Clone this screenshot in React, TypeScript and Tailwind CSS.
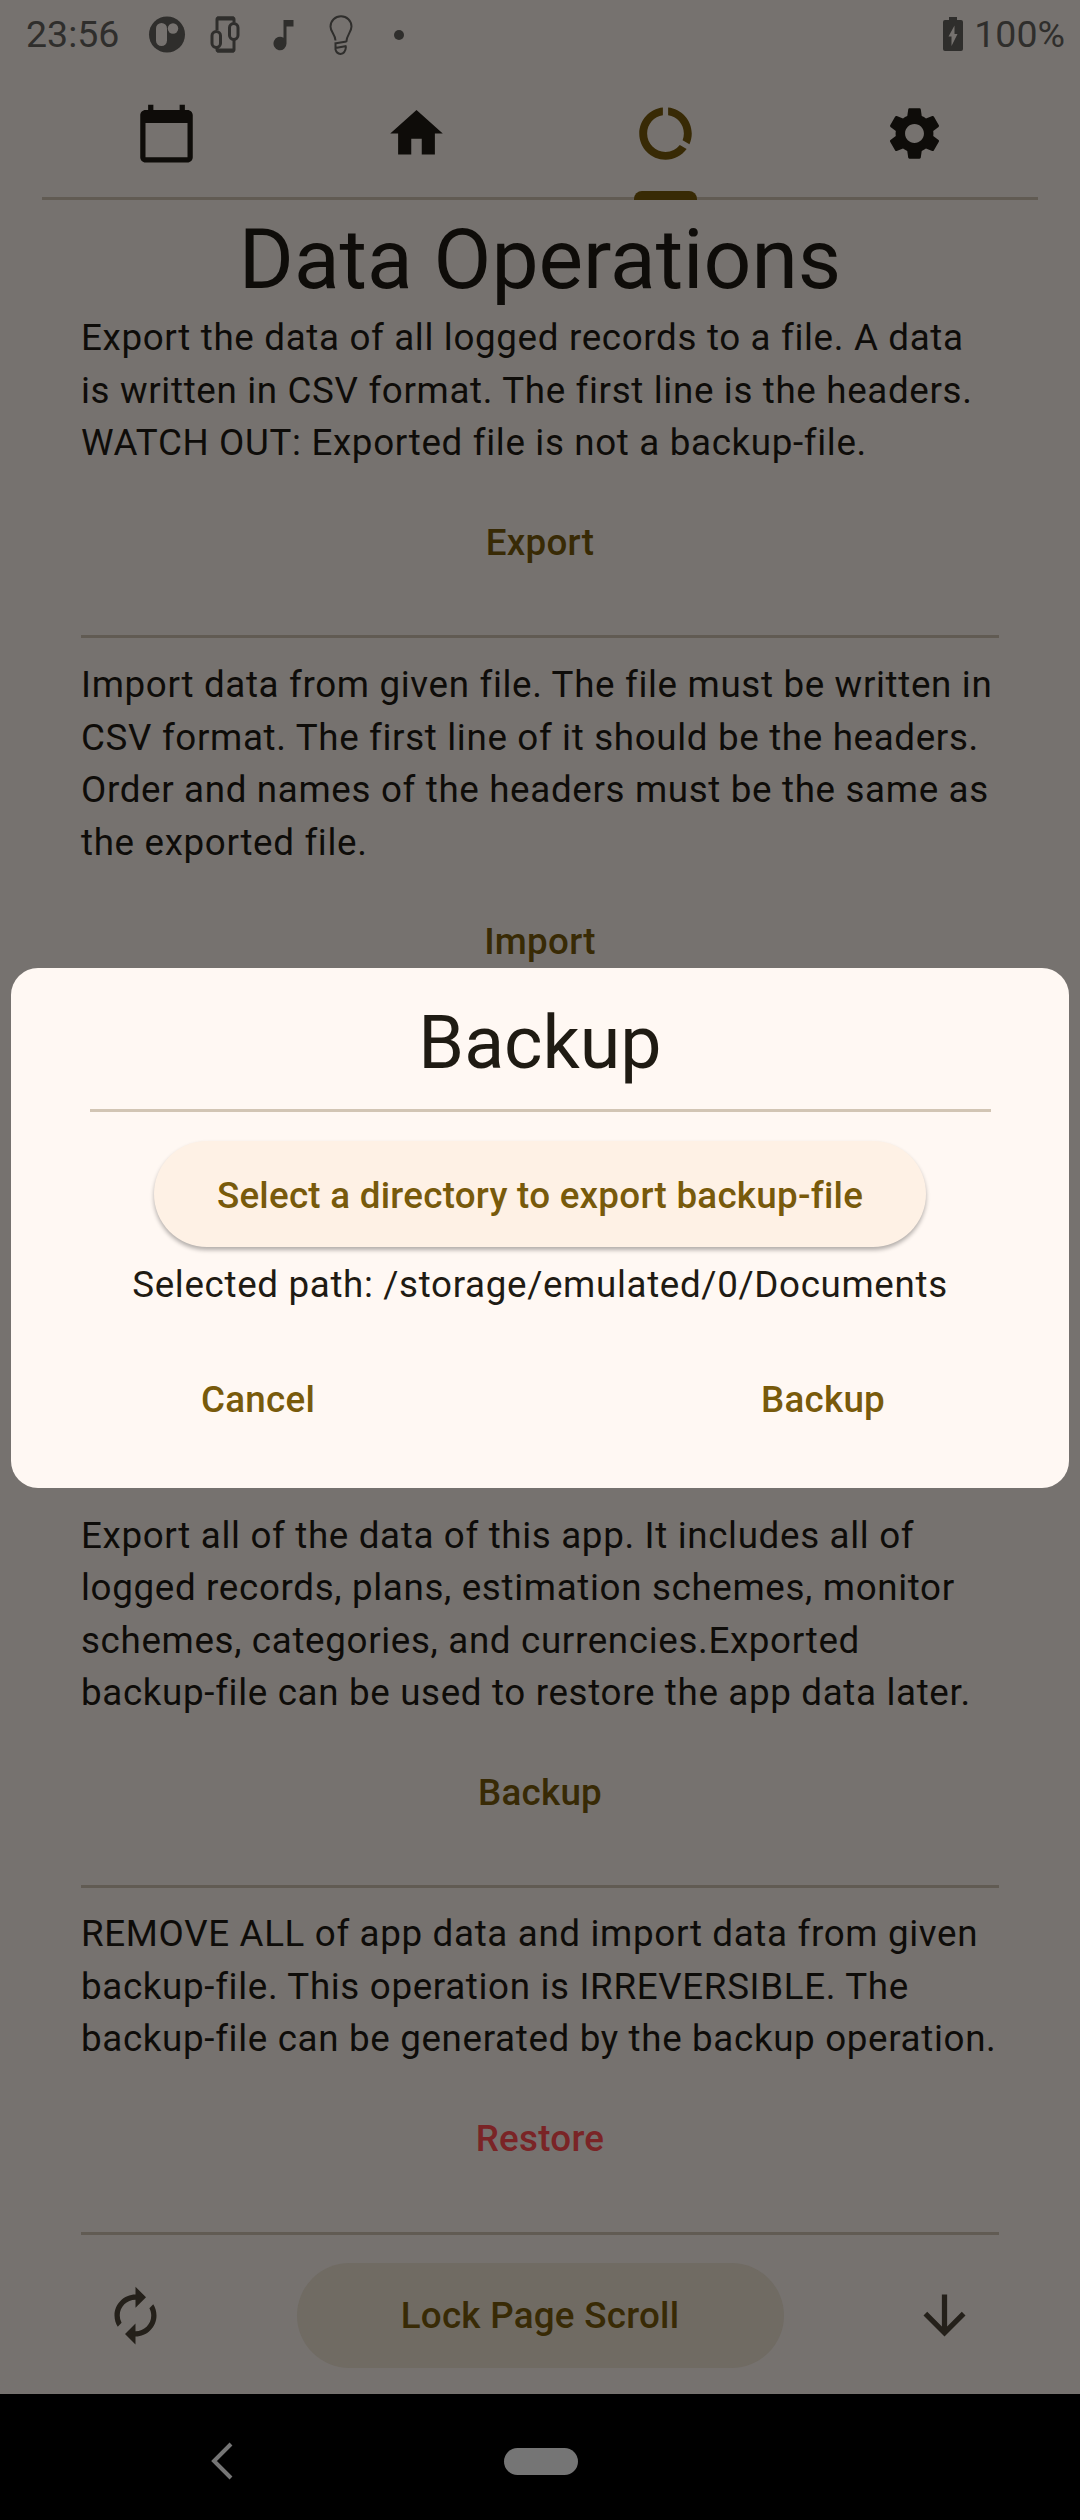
import React from "react";
import { MdHome, MdDataUsage, MdSettings, MdAutorenew, MdArrowDownward, MdCalendarToday } from "react-icons/md";

const text = "text-[36.75px] leading-[52.5px] tracking-[0.656px]";
const action = "font-medium text-[36.75px] leading-[52.5px] tracking-[0.2625px]";

function Section({ children, label, color, className }: { children: React.ReactNode; label: string; color: string; className: string }) {
  return (
    <section className={`mx-[81px] flex flex-col items-center border-b-[3px] border-[#615b53] ${className}`}>
      <p className={`w-full whitespace-nowrap text-[#0e0c09] ${text}`}>{children}</p>
      <button className={`mt-[47px] ${action} ${color}`}>{label}</button>
    </section>
  );
}

export default function App() {
  return (
    <div className="relative flex h-[2520px] w-[1080px] flex-col overflow-hidden bg-[#76726f] font-[Roboto,sans-serif]">
      <header className="flex h-[69px] shrink-0 items-center pl-[26px] pr-[15px] text-[#2f2e2c]">
        <span className="w-[122px] text-[37.5px] font-[450] leading-[69px]">23:56</span>
        <svg width="38" height="38" viewBox="0 0 38 38" className="shrink-0">
          <circle cx="19" cy="18.5" r="18" fill="#2f2e2c" />
          <rect x="8" y="7" width="11" height="23" rx="5.5" fill="#76726f" />
          <circle cx="25" cy="12.5" r="5.2" fill="#76726f" />
        </svg>
        <svg width="32" height="40" viewBox="0 0 32 40" fill="none" stroke="#2f2e2c" className="ml-[23px] shrink-0">
          <path d="M8 15V4.500q0-1.500 1.500-1.500h14q1.500 0 1.500 1.500v3M8 32v2.500q0 1.500 1.500 1.500h14q1.500 0 1.500-1.500V23" strokeWidth="3" />
          <path d="M8 3.500h17M8 35.500h17" strokeWidth="4" />
          <rect x="3" y="16.500" width="8.500" height="16" rx="4.200" strokeWidth="3" />
          <rect x="20.500" y="8.500" width="8.500" height="16" rx="4.200" strokeWidth="3" />
        </svg>
        <svg width="22" height="34" viewBox="0 0 22 34" fill="#2f2e2c" className="ml-[31px] shrink-0">
          <path d="M11.500 2H21.500V8.500H14.500V25.500A6.500 6.800 0 1 1 11.500 19.800Z" />
        </svg>
        <svg width="26" height="42" viewBox="0 0 26 42" fill="none" stroke="#2f2e2c" strokeWidth="2" className="ml-[34px] shrink-0">
          <path d="M7.500 26.500C7 20 2.500 18 2.500 12.500a10.500 10.200 0 0 1 21 0C23.500 18 18.500 21 18.300 28M6.500 29.500l12-2M7.500 29.500v6q1 4 5 4.500 5-.5 5.500-7.500M7.500 34l11-2" />
        </svg>
        <span className="ml-[40px] size-[10px] rounded-full bg-[#2f2e2c]" />
        <span className="flex-1" />
        <svg width="20" height="36" viewBox="0 0 20 36" className="mr-[11px] shrink-0">
          <path fill="#2f2e2c" fillRule="evenodd" d="M6 0h8v3h4q2 0 2 2v27q0 2-2 2H2q-2 0-2-2V5q0-2 2-2h4zM11.500 8.500L5.500 19.500h3v9.500l6-12h-3z" />
        </svg>
        <span className="text-[37.5px] font-[450] leading-[69px]">100%</span>
      </header>

      <nav className="mx-[42px] grid h-[131px] shrink-0 grid-cols-4 border-b-[3px] border-[#615b53] pt-px text-[#0e0c09]">
        <div className="flex items-center justify-center"><MdCalendarToday size={63} /></div>
        <div className="flex items-center justify-center pl-[2px]"><MdHome size={63} /></div>
        <div className="relative flex items-center justify-center pl-px text-[#382a05]">
          <MdDataUsage size={63} />
          <span className="absolute -bottom-[3px] h-[9px] w-[63px] rounded-t-[8px] bg-[#382a05]" />
        </div>
        <div className="flex items-center justify-center pl-[2px]"><MdSettings size={63} /></div>
      </nav>

      <h1 className="mt-[7px] h-[105px] shrink-0 text-center text-[84px] leading-[105px] text-[#0e0c09]">Data Operations</h1>
      <Section label="Export" color="text-[#382a05]" className="h-[326px]">
        Export the data of all logged records to a file. A data<br />is written in CSV format. The first line is the headers.<br />WATCH OUT: Exported file is not a backup-file.
      </Section>
      <Section label="Import" color="text-[#382a05]" className="mt-[21px] h-[398px]">
        Import data from given file. The file must be written in<br />CSV format. The first line of it should be the headers.<br />Order and names of the headers must be the same as<br />the exported file.
      </Section>
      <Section label="Backup" color="text-[#382a05]" className="mt-[452.5px] h-[378.5px]">
        Export all of the data of this app. It includes all of<br />logged records, plans, estimation schemes, monitor<br />schemes, categories, and currencies.Exported<br />backup-file can be used to restore the app data later.
      </Section>
      <Section label="Restore" color="text-[#7a2426]" className="mt-[20px] h-[327px]">
        REMOVE ALL of app data and import data from given<br />backup-file. This operation is IRREVERSIBLE. The<br />backup-file can be generated by the backup operation.
      </Section>

      <div className="mt-[28px] flex h-[105px] shrink-0 items-center justify-between px-[104px] text-[#24201a]">
        <MdAutorenew size={63} />
        <button className={`h-[105px] w-[487px] rounded-full bg-[#706b63] pt-px text-[#382a05] ${action}`}>Lock Page Scroll</button>
        <MdArrowDownward size={63} />
      </div>

      <footer className="mt-auto flex h-[126px] shrink-0 items-center bg-black pt-[8px]">
        <svg width="22" height="38" viewBox="0 0 22 38" fill="none" stroke="#757575" strokeWidth="4" className="ml-[211px]"><path d="M20 2L3 19l17 17" /></svg>
        <span className="ml-[271px] h-[27px] w-[74px] rounded-full bg-[#757575]" />
      </footer>

      <div role="dialog" className="absolute left-[11px] top-[968px] flex h-[520px] w-[1058px] flex-col items-center rounded-[27px] bg-[#fff8f3] text-[#1f1b13]">
        <h2 className="mt-[28px] text-[73.5px] leading-[94.5px]">Backup</h2>
        <div className="mt-[18px] h-[3px] w-[901px] bg-[#d2c5b4]" />
        <button className={`mt-[29px] h-[106px] w-[772px] rounded-full bg-[#fef1e5] pt-[5px] text-[#785a0b] shadow-[0_3px_4px_rgba(0,0,0,0.3)] ${action}`}>Select a directory to export backup-file</button>
        <p className={`mt-[12px] ${text}`}>Selected path: /storage/emulated/0/Documents</p>
        <div className="mt-[63px] flex w-full justify-between pl-[190px] pr-[184px] text-[#785a0b]">
          <button className={action}>Cancel</button>
          <button className={action}>Backup</button>
        </div>
      </div>
    </div>
  );
}
